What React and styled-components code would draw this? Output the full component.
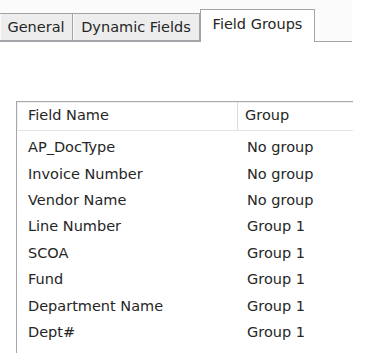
import React from 'react'
import styled, { createGlobalStyle } from 'styled-components'

const GlobalStyle = createGlobalStyle`
  html, body {
    margin: 0;
    padding: 0;
    background: #ffffff;
  }
  body {
    font-family: 'DejaVu Sans', Verdana, sans-serif;
    font-size: 14.5px;
    color: #262626;
  }
`

const Page = styled.div`
  width: 365px;
  height: 353px;
  overflow: hidden;
  background: #ffffff;
`

const TabStrip = styled.div`
  display: flex;
  align-items: flex-end;
  width: 353px;
  height: 32px;
  padding-top: 9px;
  margin-left: -1px;
  border-bottom: 1px solid #a3a3a8;
  background: #fbfbfb;
`

const Tab = styled.div`
  box-sizing: border-box;
  width: ${props => props.w}px;
  height: ${props => props.active ? 33 : 28}px;
  margin-bottom: ${props => props.active ? -1 : 0}px;
  display: flex;
  align-items: center;
  justify-content: center;
  padding-bottom: ${props => props.active ? 4 : 0}px;
  background: ${props => props.active ? '#ffffff' : '#ededed'};
  border: 1px solid #a3a3a8;
  border-bottom: ${props => props.active ? 'none' : '1px solid #a3a3a8'};
  border-left: ${props => props.first ? '1px solid #a3a3a8' : props.active ? '1px solid #a3a3a8' : 'none'};
  box-shadow: ${props => props.active ? 'inset 0 1px 0 #ffffff' : 'inset 1px 0 0 #fafafa'};
  color: #262626;
  white-space: nowrap;
`

const ListBox = styled.div`
  margin: 59px 0 0 16px;
  width: 336px;
  height: 260px;
  border-top: 1px solid #a7a6ad;
  border-left: 1px solid #a7a6ad;
`

const HeaderRow = styled.div`
  display: grid;
  grid-template-columns: 221px 1fr;
  height: 28px;
  border-bottom: 1px solid #e3e3e3;
  box-shadow: inset 1px 1px 0 #f2f2f2;
`

const HeaderCell = styled.div`
  display: flex;
  align-items: center;
  padding-left: ${props => props.pad}px;
  padding-bottom: 2px;
  border-right: ${props => props.divider ? '1px solid #dcdcdc' : 'none'};
`

const Body = styled.div`
  padding-top: 3px;
`

const Row = styled.div`
  display: grid;
  grid-template-columns: 221px 1fr;
  height: 26.4px;
  align-items: center;
`

const Cell = styled.div`
  padding-left: ${props => props.pad}px;
  white-space: nowrap;
`

const rows = [
  ['AP_DocType', 'No group'],
  ['Invoice Number', 'No group'],
  ['Vendor Name', 'No group'],
  ['Line Number', 'Group 1'],
  ['SCOA', 'Group 1'],
  ['Fund', 'Group 1'],
  ['Department Name', 'Group 1'],
  ['Dept#', 'Group 1'],
]

export default function App() {
  return (
    <Page>
      <GlobalStyle />
      <TabStrip>
        <Tab w={74} first>General</Tab>
        <Tab w={127}>Dynamic Fields</Tab>
        <Tab w={115} active>Field Groups</Tab>
      </TabStrip>
      <ListBox>
        <HeaderRow>
          <HeaderCell pad={11} divider>Field Name</HeaderCell>
          <HeaderCell pad={7}>Group</HeaderCell>
        </HeaderRow>
        <Body>
          {rows.map(([name, group]) => (
            <Row key={name}>
              <Cell pad={11}>{name}</Cell>
              <Cell pad={9}>{group}</Cell>
            </Row>
          ))}
        </Body>
      </ListBox>
    </Page>
  )
}
